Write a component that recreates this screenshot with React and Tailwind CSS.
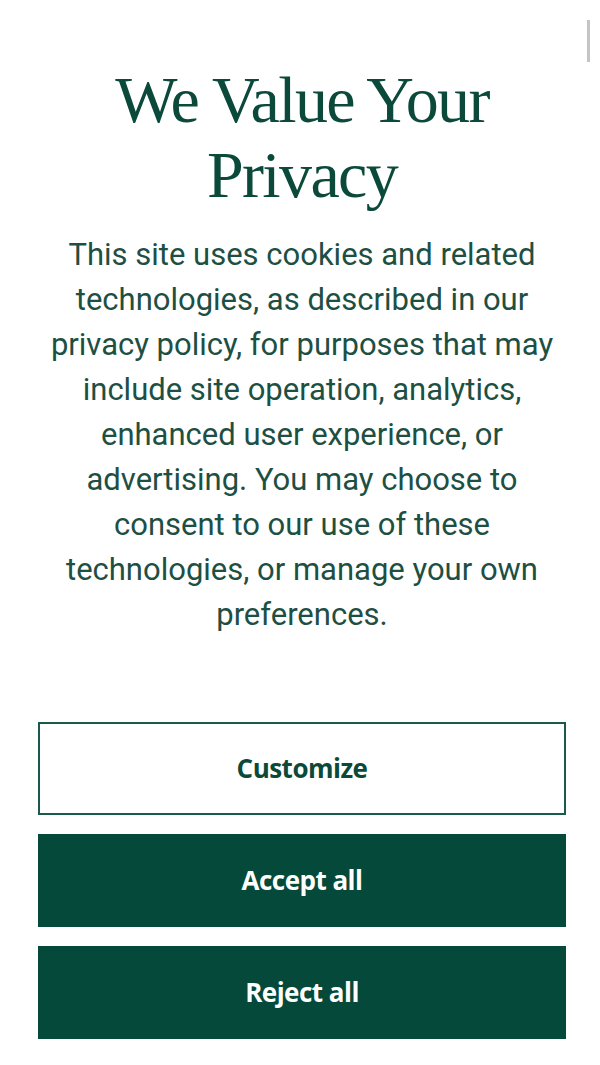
import React from 'react';

export default function App() {
  return (
    <div className="relative min-h-[1065px] w-[600px] bg-white">
      {/* overlay scrollbar thumb */}
      <div className="absolute right-[10px] top-[20px] h-[42px] w-[3px] bg-[#c4c4c4]" />

      <div className="flex flex-col pl-[38px] pr-[34px] pt-[62px]">
        <h1 className="text-center font-['Liberation_Serif',serif] text-[66px] leading-[75px] tracking-[-0.025em] text-[#0b4a3b]">
          We Value Your Privacy
        </h1>

        <p className="mx-auto mt-[20px] max-w-[528px] text-center font-['Roboto',sans-serif] text-[31px] leading-[45px] text-[#1d4f43]">
          This site uses cookies and related technologies, as described in our privacy policy, for purposes that may include site operation, analytics, enhanced user experience, or advertising. You may choose to consent to our use of these technologies, or manage your own preferences.
        </p>

        <div className="mt-[85px] flex flex-col gap-[19px]">
          <button className="h-[93px] w-full border-2 border-[#1a5a4a] bg-white font-['Open_Sans',sans-serif] text-[26px] font-bold tracking-[-0.02em] text-[#0b4a3b]">
            Customize
          </button>
          <button className="h-[93px] w-full bg-[#04493a] font-['Open_Sans',sans-serif] text-[26px] font-bold tracking-[-0.02em] text-white">
            Accept all
          </button>
          <button className="h-[93px] w-full bg-[#04493a] font-['Open_Sans',sans-serif] text-[26px] font-bold tracking-[-0.02em] text-white">
            Reject all
          </button>
        </div>
      </div>
    </div>
  );
}
